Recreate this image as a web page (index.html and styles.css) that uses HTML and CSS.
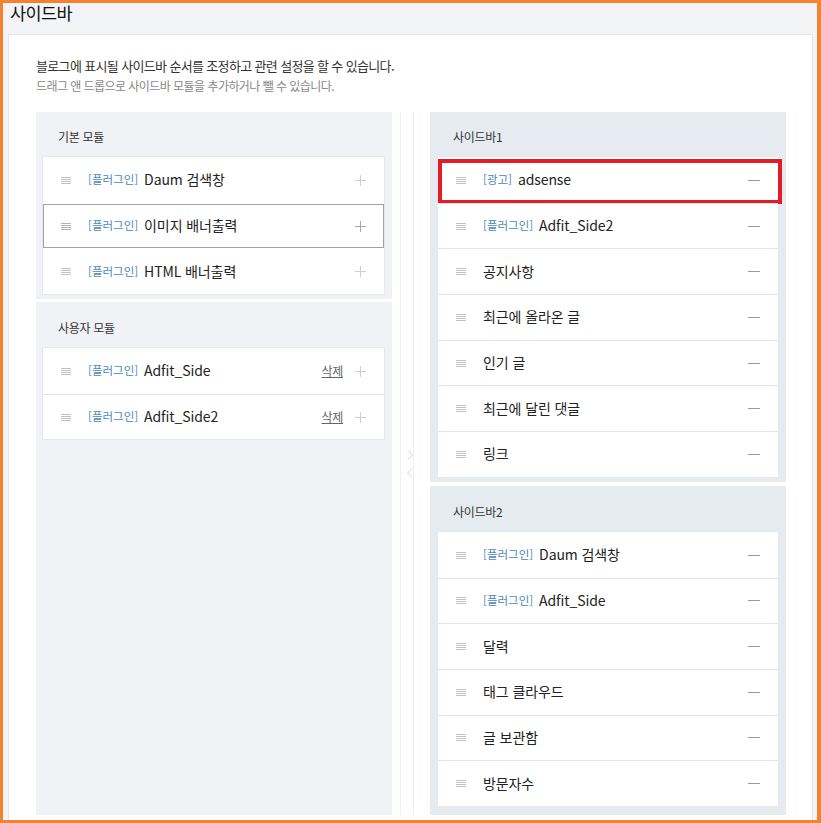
FILE: index.html
```html
<!DOCTYPE html>
<html lang="ko">
<head>
  <meta charset="UTF-8" />
  <meta name="viewport" content="width=device-width, initial-scale=1.0" />
  <title>사이드바</title>
  <link rel="stylesheet" href="styles.css">
</head>
<body>
  <h1 class="page-title">사이드바</h1>

  <div class="card">
    <p class="desc">블로그에 표시될 사이드바 순서를 조정하고 관련 설정을 할 수 있습니다.</p>
    <p class="desc sub">드래그 앤 드롭으로 사이드바 모듈을 추가하거나 뺄 수 있습니다.</p>

    <div class="board">
      <div class="col">
        <section class="panel">
          <div class="panel-title">기본 모듈</div>
          <ul class="list">
            <li class="row">
              <span class="drag"><svg width="10" height="7" viewBox="0 0 10 7"><path d="M0 .5h10M0 2.5h10M0 4.5h10M0 6.5h10" stroke="#c2c2c2" stroke-width="1"/></svg></span>
              <span class="name"><em class="tag">[플러그인]</em>Daum 검색창</span>
              <span class="add"><svg width="11" height="11" viewBox="0 0 11 11"><path d="M5.5 0v11M0 5.5h11" stroke="#cfcfcf" stroke-width="1"/></svg></span>
            </li>
            <li class="row hover">
              <span class="drag"><svg width="10" height="7" viewBox="0 0 10 7"><path d="M0 .5h10M0 2.5h10M0 4.5h10M0 6.5h10" stroke="#b5b5b5" stroke-width="1"/></svg></span>
              <span class="name"><em class="tag">[플러그인]</em>이미지 배너출력</span>
              <span class="add"><svg width="11" height="11" viewBox="0 0 11 11"><path d="M5.5 0v11M0 5.5h11" stroke="#a8a8a8" stroke-width="1"/></svg></span>
            </li>
            <li class="row">
              <span class="drag"><svg width="10" height="7" viewBox="0 0 10 7"><path d="M0 .5h10M0 2.5h10M0 4.5h10M0 6.5h10" stroke="#c2c2c2" stroke-width="1"/></svg></span>
              <span class="name"><em class="tag">[플러그인]</em>HTML 배너출력</span>
              <span class="add"><svg width="11" height="11" viewBox="0 0 11 11"><path d="M5.5 0v11M0 5.5h11" stroke="#cfcfcf" stroke-width="1"/></svg></span>
            </li>
          </ul>
        </section>

        <section class="panel grow">
          <div class="panel-title">사용자 모듈</div>
          <ul class="list">
            <li class="row">
              <span class="drag"><svg width="10" height="7" viewBox="0 0 10 7"><path d="M0 .5h10M0 2.5h10M0 4.5h10M0 6.5h10" stroke="#c2c2c2" stroke-width="1"/></svg></span>
              <span class="name"><em class="tag">[플러그인]</em>Adfit_Side</span>
              <a class="del" href="#">삭제</a>
              <span class="add"><svg width="11" height="11" viewBox="0 0 11 11"><path d="M5.5 0v11M0 5.5h11" stroke="#cfcfcf" stroke-width="1"/></svg></span>
            </li>
            <li class="row">
              <span class="drag"><svg width="10" height="7" viewBox="0 0 10 7"><path d="M0 .5h10M0 2.5h10M0 4.5h10M0 6.5h10" stroke="#c2c2c2" stroke-width="1"/></svg></span>
              <span class="name"><em class="tag">[플러그인]</em>Adfit_Side2</span>
              <a class="del" href="#">삭제</a>
              <span class="add"><svg width="11" height="11" viewBox="0 0 11 11"><path d="M5.5 0v11M0 5.5h11" stroke="#cfcfcf" stroke-width="1"/></svg></span>
            </li>
          </ul>
        </section>
      </div>

      <div class="divider">
        <div class="rail">
          <svg width="6" height="10" viewBox="0 0 6 10"><path d="M.5 .5l5 4.5-5 4.5" fill="none" stroke="#d6d6d6" stroke-width="1"/></svg>
          <svg width="6" height="10" viewBox="0 0 6 10"><path d="M5.5 .5L.5 5l5 4.5" fill="none" stroke="#d6d6d6" stroke-width="1"/></svg>
        </div>
      </div>

      <div class="col">
        <section class="panel blue">
          <div class="panel-title">사이드바1</div>
          <ul class="list" id="sidebar1"></ul>
        </section>
        <section class="panel blue grow">
          <div class="panel-title">사이드바2</div>
          <ul class="list" id="sidebar2"></ul>
        </section>
      </div>
    </div>
  </div>

  <script>
    const sidebar1 = [
      { tag: '[광고]', name: 'adsense', marked: true },
      { tag: '[플러그인]', name: 'Adfit_Side2' },
      { name: '공지사항' },
      { name: '최근에 올라온 글' },
      { name: '인기 글' },
      { name: '최근에 달린 댓글' },
      { name: '링크' }
    ];
    const sidebar2 = [
      { tag: '[플러그인]', name: 'Daum 검색창' },
      { tag: '[플러그인]', name: 'Adfit_Side' },
      { name: '달력' },
      { name: '태그 클라우드' },
      { name: '글 보관함' },
      { name: '방문자수' }
    ];

    function renderList(id, items) {
      const list = document.getElementById(id);
      items.forEach(item => {
        const li = document.createElement('li');
        li.className = 'row' + (item.marked ? ' marked' : '');
        li.innerHTML =
          '<span class="drag"><svg width="10" height="7" viewBox="0 0 10 7"><path d="M0 .5h10M0 2.5h10M0 4.5h10M0 6.5h10" stroke="#c2c2c2" stroke-width="1"/></svg></span>' +
          '<span class="name">' + (item.tag ? '<em class="tag">' + item.tag + '</em>' : '') + item.name + '</span>' +
          '<span class="remove"><svg width="12" height="1" viewBox="0 0 12 1"><path d="M0 .5h12" stroke="#9a9a9a" stroke-width="1"/></svg></span>';
        list.appendChild(li);
      });
    }

    renderList('sidebar1', sidebar1);
    renderList('sidebar2', sidebar2);
  </script>
</body>
</html>
```

FILE: styles.css
```css
* {
  box-sizing: border-box;
}
body {
  margin: 0;
  height: 823px;
  overflow: hidden;
  border: 3px solid #f5822f;
  border-right-width: 4px;
  background: #f3f4f6;
  font-family: "Noto Sans CJK KR", "Noto Sans", sans-serif;
  color: #222;
}
.page-title {
  margin: 0;
  height: 31px;
  padding-left: 7px;
  font-size: 17.5px;
  line-height: 20px;
  font-weight: normal;
  letter-spacing: -0.6px;
  color: #111;
}
.card {
  margin: 0 4px 0 5px;
  background: #fff;
  border: 1px solid #e3e5e8;
  border-bottom: 0;
  padding: 21px 26px 0 27px;
  height: 786px;
}
.desc {
  margin: 0;
  font-size: 13px;
  line-height: 20px;
  letter-spacing: -0.65px;
  color: #333;
}
.desc.sub {
  font-size: 12px;
  letter-spacing: -0.55px;
  color: #888;
}
.board {
  display: flex;
  margin-top: 16px;
  height: 703px;
}
.col {
  width: 356px;
  display: flex;
  flex-direction: column;
  gap: 3px;
}
.col:last-child {
  gap: 4px;
}
.panel {
  background: #f1f2f5;
  padding: 0 8px 5px 7px;
}
.panel.grow {
  padding-top: 1px;
}
.panel.blue {
  background: #e5ebf1;
  padding: 0 8px 5px 8px;
}
.panel.blue.grow {
  padding-top: 1px;
}
.panel.grow {
  flex: 1;
}
.panel-title {
  height: 45px;
  padding: 3px 0 0 15px;
  line-height: 43px;
  font-size: 12px;
  letter-spacing: -0.3px;
  color: #333;
}
.list {
  list-style: none;
  margin: 0;
  padding: 0;
  background: #fff;
  box-shadow: 0 0 0 1px #e6e8eb;
}
.row {
  position: relative;
  display: flex;
  align-items: center;
  height: 45.7px;
  padding: 0 18px 2px 18px;
  border-top: 1px solid #e4e4e4;
}
.row:first-child {
  border-top-color: transparent;
}
.row.hover {
  box-shadow: inset 0 0 0 1px #a0a0a0;
  border-top-color: transparent;
}
.row.hover + .row {
  border-top-color: transparent;
}
.row.marked::after {
  content: "";
  position: absolute;
  top: 1px;
  left: 0;
  right: -4px;
  bottom: -1px;
  border: 4px solid #e31d25;
}
.drag {
  display: flex;
  width: 10px;
  margin-right: 17px;
  margin-top: 2px;
}
.name {
  flex: 1;
  font-size: 14px;
  letter-spacing: -0.1px;
  color: #222;
}
.tag {
  font-style: normal;
  font-size: 11.5px;
  letter-spacing: 0;
  color: #4b88b7;
  margin-right: 6px;
  vertical-align: 1px;
}
.del {
  font-size: 12px;
  color: #666;
  text-decoration: underline;
  margin-right: 12px;
  letter-spacing: -0.3px;
}
.add {
  display: flex;
  margin-top: 2px;
}
.remove {
  display: flex;
  margin-top: 2px;
}
.divider {
  width: 38px;
  display: flex;
  padding-left: 8px;
}
.rail {
  width: 14px;
  border-left: 1px solid #f0f0f0;
  border-right: 1px solid #f0f0f0;
  display: flex;
  flex-direction: column;
  align-items: flex-end;
  justify-content: center;
  gap: 8px;
}
```
